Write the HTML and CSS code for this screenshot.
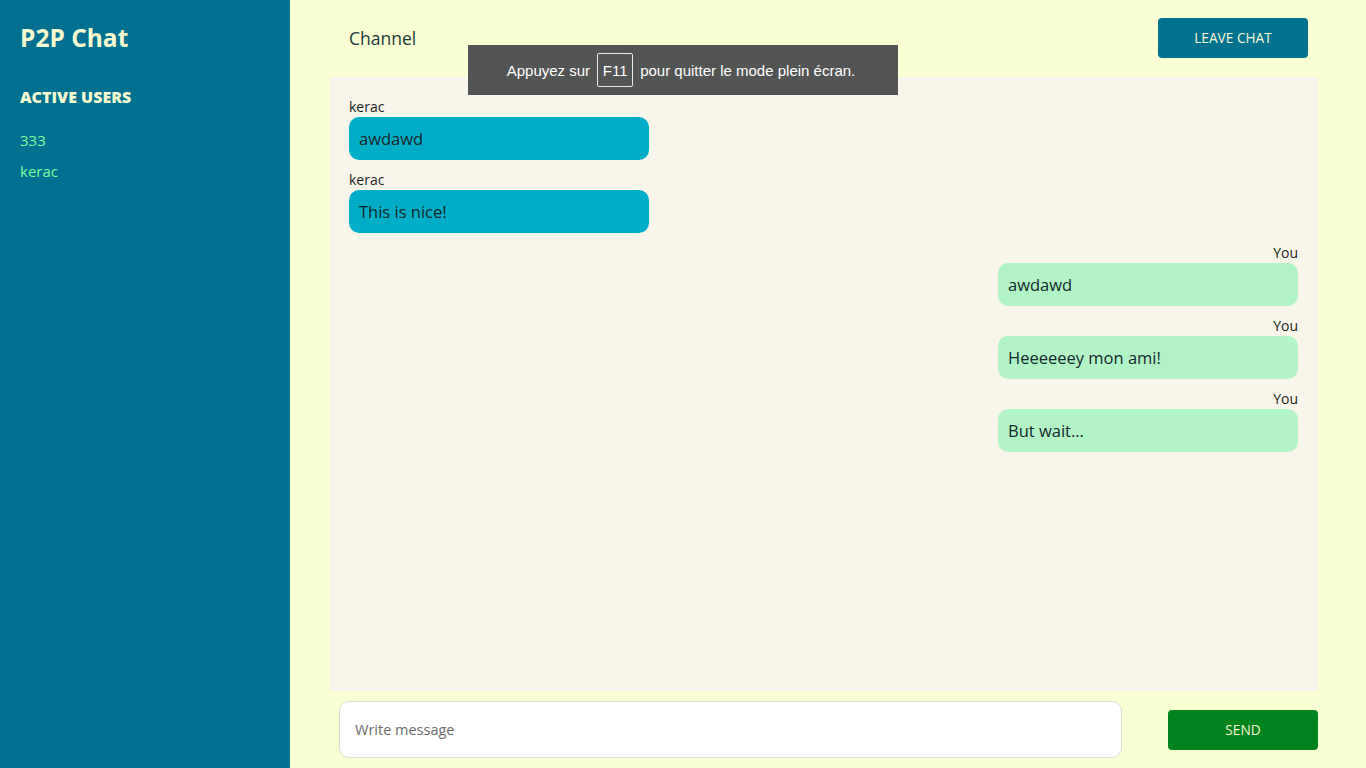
FILE: index.html
```html
<!DOCTYPE html>
<html lang="fr">
<head>
<meta charset="utf-8">
<title>P2P Chat</title>
<link rel="stylesheet" href="styles.css">
</head>
<body>
<div class="app">
  <aside class="sidebar">
    <h1 class="brand">P2P Chat</h1>
    <h2 class="users-title">ACTIVE USERS</h2>
    <ul class="users">
      <li>333</li>
      <li>kerac</li>
    </ul>
  </aside>
  <main class="main">
    <header class="topbar">
      <div class="channel">Channel</div>
      <button class="btn btn-leave">LEAVE CHAT</button>
    </header>
    <section class="messages">
      <div class="msg msg-in">
        <div class="msg-author">kerac</div>
        <div class="bubble">awdawd</div>
      </div>
      <div class="msg msg-in">
        <div class="msg-author">kerac</div>
        <div class="bubble">This is nice!</div>
      </div>
      <div class="msg msg-out">
        <div class="msg-author">You</div>
        <div class="bubble">awdawd</div>
      </div>
      <div class="msg msg-out">
        <div class="msg-author">You</div>
        <div class="bubble">Heeeeeey mon ami!</div>
      </div>
      <div class="msg msg-out">
        <div class="msg-author">You</div>
        <div class="bubble">But wait...</div>
      </div>
    </section>
    <footer class="composer">
      <input class="composer-input" type="text" placeholder="Write message">
      <button class="btn btn-send">SEND</button>
    </footer>
  </main>
</div>
<div class="fs-toast">Appuyez sur <span class="key">F11</span> pour quitter le mode plein écran.</div>
</body>
</html>
```

FILE: styles.css
```css
* { box-sizing: border-box; }
html, body { margin: 0; padding: 0; height: 100%; }
body {
  font-family: "Open Sans", "Noto Sans", sans-serif;
  background: #faffd3;
  color: #1d2b2b;
}
.app {
  display: flex;
  height: 768px;
}
.sidebar {
  width: 290px;
  flex: none;
  background: #007090;
  padding: 20px 20px;
}
.brand {
  margin: 0;
  font-size: 24.5px;
  font-weight: 700;
  line-height: 36px;
  color: #f6fbd2;
  letter-spacing: 0;
}
.users-title {
  margin: 30px 0 0;
  font-size: 16px;
  font-weight: 800;
  line-height: 22px;
  color: #f6fbd2;
}
.users {
  list-style: none;
  margin: 22px 0 0;
  padding: 0;
}
.users li {
  font-size: 15px;
  line-height: 20px;
  color: #7dfca0;
  margin-bottom: 11px;
}
.main {
  flex: 1;
  display: flex;
  flex-direction: column;
  padding: 18px 48px 10px 40px;
}
.topbar {
  display: flex;
  justify-content: space-between;
  align-items: flex-start;
  height: 59px;
  flex: none;
}
.channel {
  margin: 9px 0 0 19px;
  font-size: 17.5px;
  line-height: 22px;
  color: #1c3a3a;
}
.btn {
  border: none;
  font-family: inherit;
  cursor: pointer;
  color: #f4f7d8;
}
.btn-leave {
  width: 150px;
  height: 40px;
  margin-right: 10px;
  border-radius: 4px;
  background: #00728f;
  font-size: 13.7px;
  padding-bottom: 2px;
}
.messages {
  flex: 1;
  background: #f8f5ea;
  padding: 21px 20px 20px 19px;
  display: flex;
  flex-direction: column;
  gap: 11px;
}
.msg {
  display: flex;
  flex-direction: column;
  width: 300px;
}
.msg-out {
  align-self: flex-end;
  align-items: flex-end;
}
.msg-author {
  font-size: 14px;
  line-height: 17px;
  margin-bottom: 2px;
  color: #1f1f1f;
}
.bubble {
  width: 300px;
  height: 43px;
  border-radius: 10px;
  padding: 0 10px;
  display: flex;
  align-items: center;
  font-size: 16.5px;
  color: #10292c;
}
.msg-in .bubble { background: #00adc6; }
.msg-out .bubble { background: #b2f4c6; }
.composer {
  flex: none;
  display: flex;
  justify-content: space-between;
  align-items: center;
  padding: 10px 0 0 9px;
}
.composer-input {
  width: 783px;
  height: 57px;
  border: 1px solid #dcdcd4;
  border-radius: 10px;
  background: #fff;
  padding: 0 15px;
  font-family: inherit;
  font-size: 14.5px;
  color: #333;
  outline: none;
}
.composer-input::placeholder { color: #6d6d6d; }
.btn-send {
  width: 150px;
  height: 40px;
  border-radius: 4px;
  background: #00821c;
  font-size: 13.7px;
}
.fs-toast {
  position: absolute;
  left: 468px;
  top: 45px;
  width: 430px;
  height: 50px;
  background: #535555;
  color: #ffffff;
  font-family: "Liberation Sans", "Noto Sans", sans-serif;
  font-size: 15px;
  display: flex;
  align-items: center;
  justify-content: center;
  gap: 7px;
  padding-right: 4px;
}
.key {
  display: inline-flex;
  align-items: center;
  justify-content: center;
  width: 36px;
  height: 34px;
  border: 1px solid #e8e8e8;
  border-radius: 2px;
}
```
